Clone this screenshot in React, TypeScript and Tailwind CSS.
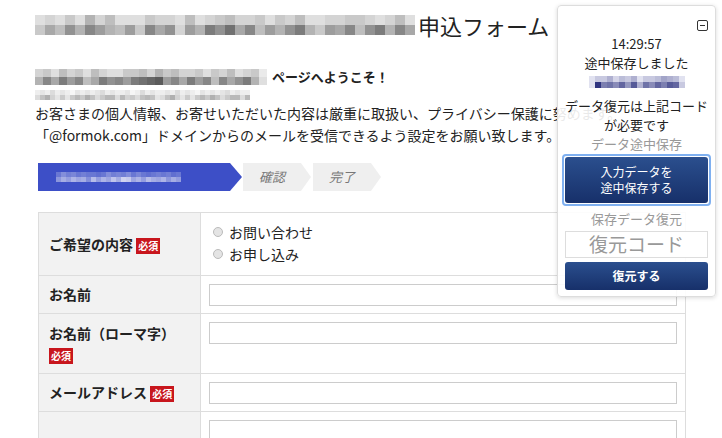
const jp = { fontFamily: '"Noto Sans CJK JP", "Noto Sans", sans-serif' };

// pixelated blocks standing in for the masked text in the screenshot
function Mosaic({ rows, size, tone, className }: { rows: string[]; size: number; tone: (d: number) => string; className?: string }) {
  return (
    <div className={`flex flex-col ${className ?? ""}`}>
      {rows.map((r, j) => (
        <div key={j} className="flex">
          {r.split("").map((ch, i) => (
            <div key={i} className="shrink-0" style={{ background: tone(parseInt(ch, 16) / 15), width: size, height: size }} />
          ))}
        </div>
      ))}
    </div>
  );
}

const gray = (k: number) => {
  const v = Math.round(245 - k * 165);
  return `rgb(${v},${v},${v})`;
};
const blue = (k: number) =>
  `rgb(${Math.round(238 - k * 190)},${Math.round(238 - k * 185)},${Math.round(248 - k * 120)})`;
const light = (k: number) =>
  `rgb(${Math.round(85 + k * 160)},${Math.round(100 + k * 145)},${Math.round(205 + k * 45)})`;

function Badge() {
  return (
    <span className="inline-block bg-[#c8161d] text-white text-[10px] font-bold leading-[16px] px-[2px] align-middle">
      必須
    </span>
  );
}

function Radio({ label }: { label: string }) {
  return (
    <label className="flex items-center gap-[6px] h-[22px]">
      <span className="w-[10px] h-[10px] rounded-full border border-[#bbb] bg-[#e4e4e4]" />
      <span className="text-[14px] text-[#222]">{label}</span>
    </label>
  );
}

function Field() {
  return <div className="h-[22px] border border-[#ccc] bg-white" />;
}

function Row({ label, children, h, top }: { label: React.ReactNode; children: React.ReactNode; h: string; top?: boolean }) {
  return (
    <div className={`flex border-b border-[#ddd] ${h}`}>
      <div className={`w-[162px] shrink-0 bg-[#f2f2f2] border-r border-[#ddd] px-[10px] flex ${top ? "items-start pt-[9px]" : "items-center"}`}>
        <div className="text-[14px] font-bold text-[#222] leading-[21px]">{label}</div>
      </div>
      <div className="flex-1 px-[8px] flex flex-col justify-start pt-[8px]">{children}</div>
    </div>
  );
}

function StepArrow({ label, className }: { label: string; className: string }) {
  return (
    <div className={`h-[28px] flex items-center ${className}`}>
      <div className="flex-1 h-full bg-[#efefef] flex items-center pl-[16px] text-[13px] italic text-[#777]">{label}</div>
      <div className="w-0 h-0 border-y-[14px] border-y-transparent border-l-[10px] border-l-[#efefef]" />
    </div>
  );
}

function SavePanel() {
  return (
    <div className="absolute left-[557px] top-[5px] w-[159px] h-[292px] rounded-[4px] border border-[#ddd] bg-white/90 shadow-[0_1px_4px_rgba(0,0,0,0.15)] flex flex-col items-center text-[#222]">
      <div className="absolute right-[7px] top-[14px] w-[11px] h-[11px] border border-[#333] rounded-[2px] flex items-center justify-center">
        <div className="w-[5px] h-[1.5px] bg-[#333]" />
      </div>
      <div className="mt-[28px] text-[13px] leading-[19px]">14:29:57</div>
      <div className="text-[13px] leading-[19px]">途中保存しました</div>
      <Mosaic size={6} tone={blue} className="mt-[4px]" rows={["1335243513346541", "1f9a8b7c5a8b9cb3"]} />
      <div className="mt-[8px] text-[13px] leading-[19px] text-center">
        データ復元は上記コード
        <br />
        が必要です
      </div>
      <div className="text-[13px] leading-[19px] text-[#999]">データ途中保存</div>
      <div className="mt-[1px] w-[149px] rounded-[4px] border-[2px] border-[#7fb0f0] p-[1px]">
        <div className="h-[46px] rounded-[3px] bg-gradient-to-b from-[#2b4f8e] to-[#17306a] text-white text-[12px] leading-[16px] flex flex-col items-center justify-center">
          <span>入力データを</span>
          <span>途中保存する</span>
        </div>
      </div>
      <div className="mt-[3px] text-[13px] leading-[19px] text-[#999]">保存データ復元</div>
      <div className="mt-[3px] w-[143px] h-[27px] border border-[#ddd] bg-white flex items-center justify-center text-[19px] text-[#999]">
        復元コード
      </div>
      <div className="mt-[4px] w-[143px] h-[28px] rounded-[3px] bg-gradient-to-b from-[#2b4f8e] to-[#17306a] text-white text-[12px] font-bold flex items-center justify-center">
        復元する
      </div>
    </div>
  );
}

export default function App() {
  return (
    <div className="relative w-[722px] h-[438px] overflow-hidden bg-white text-[#222]" style={jp}>
      <div className="pl-[35px] pt-[10px]">
        <div className="flex items-center h-[30px]">
          <Mosaic
            size={10}
            tone={gray}
            rows={["23242635222433252345334243522334432352", "47596a86584a79386b9c7a5869b6487a59b6a7"]}
          />
          <span className="text-[22px] leading-[30px] ml-[3px]">申込フォーム</span>
        </div>
        <div className="mt-[28px] flex items-center h-[18px]">
          <Mosaic
            size={8}
            tone={gray}
            rows={["34253425322445364533424352341", "6a7b8a57b9a8bcde8a7b8a5a79b62"]}
            className="mr-[5px]"
          />
          <span className="text-[13px] font-bold leading-[18px]">ページへようこそ！</span>
        </div>
        <Mosaic
          size={5}
          tone={gray}
          rows={["1213121021212312112013121121312102121231211", "3684252575863577374536762368425257586357737"]}
          className="mt-[4px] opacity-80"
        />
        <div className="mt-[2px] text-[14px] leading-[22px] whitespace-nowrap">
          <div>お客さまの個人情報、お寄せいただいた内容は厳重に取扱い、プライバシー保護に努めます。</div>
          <div>「@formok.com」ドメインからのメールを受信できるよう設定をお願い致します。</div>
        </div>
      </div>

      <div className="ml-[38px] mt-[17px] flex items-center">
        <div className="h-[28px] w-[192px] bg-[#3d4fc7] flex items-center pl-[18px]">
          <Mosaic size={5} tone={light} rows={["3645343323645463532343423", "7a8b9a6c8b9dafe9b8ca9b7a8"]} className="opacity-80" />
        </div>
        <div className="w-0 h-0 border-y-[14px] border-y-transparent border-l-[12px] border-l-[#3d4fc7]" />
        <StepArrow label="確認" className="w-[68px] ml-[1px]" />
        <StepArrow label="完了" className="w-[68px] ml-[2px]" />
      </div>

      <div className="ml-[38px] mt-[21px] w-[648px] border-t border-l border-r border-[#ddd]">
        <Row
          h="h-[63px]"
          label={
            <span>
              ご希望の内容 <Badge />
            </span>
          }
        >
          <div className="pl-[4px]">
            <Radio label="お問い合わせ" />
            <Radio label="お申し込み" />
          </div>
        </Row>
        <Row h="h-[38px]" label="お名前">
          <Field />
        </Row>
        <Row
          h="h-[60px]"
          top
          label={
            <span>
              お名前（ローマ字）
              <br />
              <Badge />
            </span>
          }
        >
          <Field />
        </Row>
        <Row
          h="h-[38px]"
          label={
            <span>
              メールアドレス <Badge />
            </span>
          }
        >
          <Field />
        </Row>
        <Row h="h-[40px]" label="">
          <Field />
        </Row>
      </div>

      <SavePanel />
    </div>
  );
}
